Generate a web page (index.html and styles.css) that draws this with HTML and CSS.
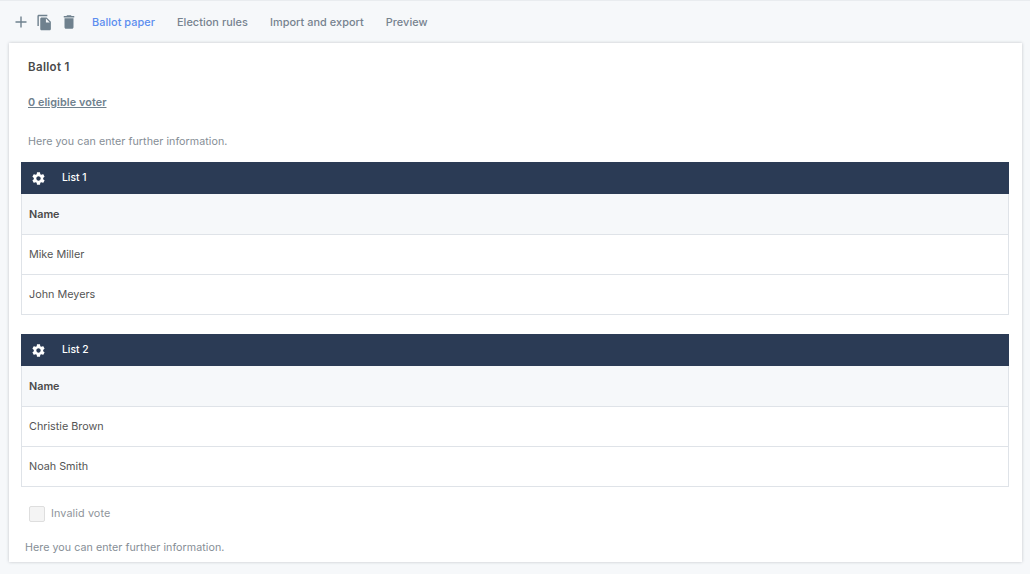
FILE: index.html
```html
<!DOCTYPE html>
<html lang="en">
<head>
<meta charset="utf-8">
<title>Ballot paper</title>
<link rel="stylesheet" href="styles.css">
</head>
<body>
<div class="toolbar">
  <div class="tools">
    <svg class="icon plus" viewBox="0 0 14 14"><path d="M7 1.5v11M1.5 7h11"/></svg>
    <svg class="icon copy" viewBox="0 0 24 24"><path d="M16 1H4c-1.1 0-2 .9-2 2v14h2V3h12V1zm-1 4H8c-1.1 0-2 .9-2 2v14c0 1.1.9 2 2 2h11c1.1 0 2-.9 2-2V11l-6-6zm-1 7V6.5l5.5 5.5H14z"/></svg>
    <svg class="icon trash" viewBox="0 0 24 24"><path d="M6 19c0 1.1.9 2 2 2h8c1.1 0 2-.9 2-2V7H6v12zM19 4h-3.5l-1-1h-5l-1 1H5v2h14V4z"/></svg>
  </div>
  <nav class="tabs">
    <a class="tab active">Ballot paper</a>
    <a class="tab">Election rules</a>
    <a class="tab">Import and export</a>
    <a class="tab">Preview</a>
  </nav>
</div>
<main class="card">
  <div class="intro">
    <h1 class="title">Ballot 1</h1>
    <a class="voters">0 eligible voter</a>
    <p class="info">Here you can enter further information.</p>
  </div>
  <section class="list">
    <div class="list-head">
      <svg class="gear" viewBox="0 0 24 24"><path d="M19.4 13c.04-.33.1-.66.1-1s-.06-.67-.1-1l2.1-1.65c.2-.15.25-.42.13-.64l-2-3.46c-.12-.22-.39-.3-.61-.22l-2.49 1c-.52-.4-1.08-.73-1.69-.98l-.38-2.65C14.46 2.18 14.25 2 14 2h-4c-.25 0-.46.18-.49.42l-.38 2.65c-.61.25-1.17.59-1.69.98l-2.49-1c-.23-.09-.49 0-.61.22l-2 3.46c-.13.22-.07.49.12.64L4.56 11c-.04.33-.06.66-.06 1s.02.67.06 1l-2.1 1.65c-.2.15-.25.42-.13.64l2 3.46c.12.22.39.3.61.22l2.49-1c.52.4 1.08.73 1.69.98l.38 2.65c.03.24.24.42.49.42h4c.25 0 .46-.18.49-.42l.38-2.65c.61-.25 1.17-.59 1.69-.98l2.49 1c.23.09.49 0 .61-.22l2-3.46c.12-.22.07-.49-.12-.64L19.4 13zM12 15.5c-1.93 0-3.5-1.57-3.5-3.5s1.57-3.5 3.5-3.5 3.5 1.57 3.5 3.5-1.57 3.5-3.5 3.5z"/></svg>
      <span class="list-name">List 1</span>
    </div>
    <div class="row row-head">Name</div>
    <div class="row">Mike Miller</div>
    <div class="row">John Meyers</div>
  </section>
  <section class="list">
    <div class="list-head">
      <svg class="gear" viewBox="0 0 24 24"><path d="M19.4 13c.04-.33.1-.66.1-1s-.06-.67-.1-1l2.1-1.65c.2-.15.25-.42.13-.64l-2-3.46c-.12-.22-.39-.3-.61-.22l-2.49 1c-.52-.4-1.08-.73-1.69-.98l-.38-2.65C14.46 2.18 14.25 2 14 2h-4c-.25 0-.46.18-.49.42l-.38 2.65c-.61.25-1.17.59-1.69.98l-2.49-1c-.23-.09-.49 0-.61.22l-2 3.46c-.13.22-.07.49.12.64L4.56 11c-.04.33-.06.66-.06 1s.02.67.06 1l-2.1 1.65c-.2.15-.25.42-.13.64l2 3.46c.12.22.39.3.61.22l2.49-1c.52.4 1.08.73 1.69.98l.38 2.65c.03.24.24.42.49.42h4c.25 0 .46-.18.49-.42l.38-2.65c.61-.25 1.17-.59 1.69-.98l2.49 1c.23.09.49 0 .61-.22l2-3.46c.12-.22.07-.49-.12-.64L19.4 13zM12 15.5c-1.93 0-3.5-1.57-3.5-3.5s1.57-3.5 3.5-3.5 3.5 1.57 3.5 3.5-1.57 3.5-3.5 3.5z"/></svg>
      <span class="list-name">List 2</span>
    </div>
    <div class="row row-head">Name</div>
    <div class="row">Christie Brown</div>
    <div class="row">Noah Smith</div>
  </section>
  <label class="invalid"><span class="check"></span>Invalid vote</label>
  <p class="foot">Here you can enter further information.</p>
</main>
</body>
</html>
```
FILE: styles.css
```css
* { box-sizing: border-box; }
html, body { margin: 0; height: 100%; }
body {
  background: #f6f8fa;
  border-top: 1px solid #e9ecef;
  font-family: "Inter", "Liberation Sans", sans-serif;
  font-size: 11px;
  color: #4a4a4a;
  overflow: hidden;
}
.toolbar {
  display: flex;
  align-items: center;
  height: 42px;
  padding-left: 14px;
}
.tools { display: flex; align-items: center; width: 78px; }
.icon { display: block; fill: #6f818e; }
.plus { width: 14px; height: 14px; fill: none; stroke: #6f818e; stroke-width: 1.4; margin-right: 8px; }
.copy { width: 17px; height: 17px; margin-right: 7px; }
.trash { width: 18px; height: 18px; }
.tabs { display: flex; gap: 22px; }
.tab { color: #76838f; font-weight: 500; font-size: 10.9px; letter-spacing: 0.05px; }
.tab.active { color: #5b8def; }
.card {
  margin: 0 8px 0 9px;
  height: 519px;
  background: #fff;
  padding: 0 13px 0 12px;
  box-shadow: 0 0 3px rgba(60, 70, 80, 0.28);
}
.intro { padding: 17px 0 0 7px; }
.title { margin: 0; font-size: 11.5px; line-height: 14px; font-weight: 600; color: #4a4a4a; letter-spacing: 0.35px; }
.voters { display: block; margin-top: 22px; line-height: 14px; color: #6f818e; font-weight: 600; text-decoration: underline; font-size: 10.8px; letter-spacing: 0.08px; }
.info { margin: 25px 0 0; line-height: 14px; color: #868e96; font-size: 10.7px; letter-spacing: 0.05px; }
.list { margin-top: 13px; }
.list + .list { margin-top: 19px; }
.list-head {
  display: flex;
  align-items: center;
  height: 32px;
  padding-bottom: 2px;
  background: #2b3b55;
  color: #fff;
  padding-left: 10px;
}
.gear { width: 15px; height: 15px; fill: #fff; margin: 3px 16px 0 0; }
.list-name { font-size: 10.3px; font-weight: 500; }
.row {
  display: flex;
  align-items: center;
  height: 40px;
  padding-left: 7px;
  border: 1px solid #dfe3e8;
  border-top: 0;
  font-size: 10.8px;
  color: #555;
}
.row-head { height: 41px; background: #f6f8fa; font-weight: 600; color: #4a4a4a; }
.invalid {
  display: flex;
  align-items: center;
  margin: 19px 0 0 8px;
  color: #8f959b;
  font-size: 10.8px;
  letter-spacing: 0.1px;
  line-height: 16px;
}
.check {
  width: 16px;
  height: 16px;
  margin-right: 6px;
  background: #f4f4f4;
  border: 1px solid #dedede;
  border-radius: 2px;
}
.foot { margin: 19px 0 0 4px; line-height: 14px; color: #868e96; font-size: 10.7px; letter-spacing: 0.05px; }
```
